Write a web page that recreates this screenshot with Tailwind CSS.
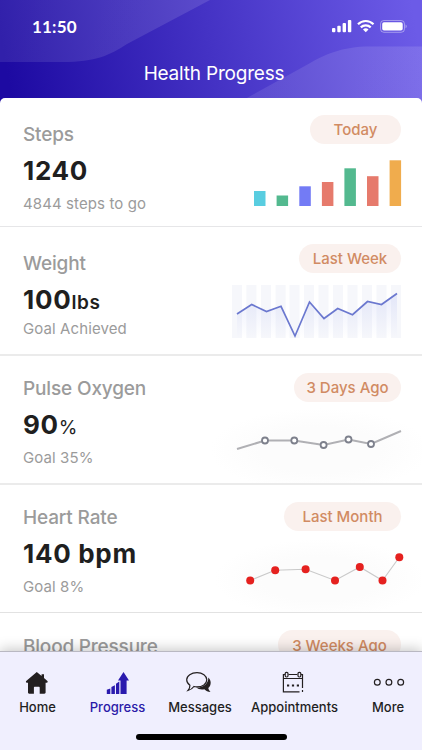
<!DOCTYPE html>
<html lang="en">
<head>
  <meta charset="UTF-8" />
  <meta name="viewport" content="width=device-width, initial-scale=1.0" />
  <title>Health Progress</title>
  <script src="https://cdn.jsdelivr.net/npm/@tailwindcss/browser@4"></script>
</head>
<body class="bg-white font-['Inter',sans-serif]">
  <div class="relative w-[422px] h-[750px] overflow-hidden flex flex-col">

    <!-- Header background -->
    <svg class="absolute top-0 left-0 -z-10" width="422" height="106" viewBox="0 0 422 106">
      <defs>
        <linearGradient id="head" gradientUnits="userSpaceOnUse" x1="10" y1="90" x2="415" y2="20">
          <stop offset="0" stop-color="#1d0aa2" />
          <stop offset="1" stop-color="#6c5be7" />
        </linearGradient>
        <linearGradient id="wave" x1="0" y1="0" x2="1" y2="0">
          <stop offset="0" stop-color="#fff" stop-opacity=".09" />
          <stop offset="1" stop-color="#fff" stop-opacity=".12" />
        </linearGradient>
      </defs>
      <rect width="422" height="106" fill="url(#head)" />
      <path d="M0 0H210L127 44C110 55 96 62 62 62H0Z" fill="url(#wave)" />
      <path d="M245 99L303 67C325 54 342 46.500 370 46.500H422V106H232Z" fill="url(#wave)" />
    </svg>

    <!-- Header -->
    <header class="h-[98px] shrink-0 text-white">
      <div class="h-[52px] flex justify-between items-center pl-[32px] pr-[15px]">
        <span class="font-['Lato',sans-serif] font-bold text-[17px] leading-5 tracking-[0.2px] mt-[1px]">11:50</span>
        <svg width="76" height="14" viewBox="331 19 76 14" fill="#fff">
          <rect x="332" y="28" width="3.400" height="4.200" rx="1" />
          <rect x="337.300" y="25.700" width="3.400" height="6.500" rx="1" />
          <rect x="342.600" y="23" width="3.400" height="9.200" rx="1" />
          <rect x="347.900" y="20" width="3.400" height="12.200" rx="1" />
          <g fill="none" stroke="#fff" stroke-width="2.200">
            <path d="M358 24.200C362.300 19.900 369.200 19.900 373.500 24.200" />
            <path d="M360.800 27.400C363.600 24.600 367.900 24.600 370.700 27.400" />
          </g>
          <path d="M363 29.400C364.600 27.900 366.900 27.900 368.500 29.400L365.750 32.200Z" />
          <rect x="380.500" y="20.500" width="24" height="11.800" rx="3.400" fill="none" stroke="#fff" stroke-opacity=".4" />
          <rect x="382.200" y="22.200" width="20.500" height="8.400" rx="1.800" />
          <path d="M405.600 24.500C407 25 407 27.800 405.600 28.300Z" opacity=".5" />
        </svg>
      </div>
      <h1 class="text-center text-[19px] leading-6 pt-[10px] pl-[6px] tracking-[-0.2px]">Health Progress</h1>
    </header>

    <main class="flex-1 min-h-0 overflow-hidden text-[#1f1f1f]">
      <!-- Steps -->
      <section class="h-[129px] flex justify-between bg-white rounded-t-[5px] border-b border-[#e6e6e8]">
        <div class="pl-[23px] pt-[25px]">
          <h2 class="text-[19px] leading-6 font-medium tracking-[-0.15px] text-[#9b9b9b]">Steps</h2>
          <p class="mt-[8px] text-[26px] leading-8 font-bold tracking-[0.7px]">1240</p>
          <p class="mt-[7px] text-[15px] leading-5 tracking-[0.1px] text-[#9b9b9b]">4844 steps to go</p>
        </div>
        <div class="w-[211px] pt-[17px] flex flex-col items-end">
          <span class="mr-[21px] w-[91px] h-[29px] rounded-full bg-[#faf1ee] text-[#d18b63] text-[15px] leading-[29px] font-medium text-center">Today</span>
          <svg width="211" height="81" viewBox="211 144 211 81">
            <rect x="254" y="191" width="11.500" height="15" fill="#59cde0" />
            <rect x="276.600" y="195.500" width="11.500" height="10.500" fill="#53b98f" />
            <rect x="299.300" y="186.300" width="11.500" height="19.700" fill="#737bf5" />
            <rect x="321.900" y="182" width="11.500" height="24" fill="#e67a6c" />
            <rect x="344.400" y="168.300" width="11.500" height="37.700" fill="#53b98f" />
            <rect x="367" y="176.200" width="11.500" height="29.800" fill="#e67a6c" />
            <rect x="389.600" y="160.300" width="11.500" height="45.700" fill="#f0ac4d" />
          </svg>
        </div>
      </section>

      <!-- Weight -->
      <section class="h-[129px] flex justify-between bg-white border-b-2 border-[#ebebeb]">
        <div class="pl-[23px] pt-[25px]">
          <h2 class="text-[19px] leading-6 font-medium tracking-[-0.15px] text-[#9b9b9b]">Weight</h2>
          <p class="mt-[8px] text-[26px] leading-8 font-bold tracking-[0.7px]">100<span class="text-[19px] leading-none font-semibold">lbs</span></p>
          <p class="mt-[3px] text-[15px] leading-5 tracking-[0.1px] text-[#9b9b9b]">Goal Achieved</p>
        </div>
        <div class="w-[211px] pt-[17px] flex flex-col items-end">
          <span class="mr-[21px] w-[102px] h-[29px] rounded-full bg-[#faf1ee] text-[#d18b63] text-[15px] leading-[30px] font-medium text-center">Last Week</span>
          <svg width="211" height="81" viewBox="211 273 211 81">
            <defs>
              <linearGradient id="area" x1="0" y1="0" x2="0" y2="1">
                <stop offset="0" stop-color="#7f8fe8" stop-opacity=".16" />
                <stop offset="1" stop-color="#7f8fe8" stop-opacity="0" />
              </linearGradient>
            </defs>
            <g fill="#f6f7fb">
              <rect x="232" y="285" width="10" height="53" />
              <rect x="246.400" y="285" width="10" height="53" />
              <rect x="261" y="285" width="10" height="53" />
              <rect x="275.600" y="285" width="10" height="53" />
              <rect x="289.500" y="285" width="10" height="53" />
              <rect x="304" y="285" width="10" height="53" />
              <rect x="318.500" y="285" width="10" height="53" />
              <rect x="333" y="285" width="10" height="53" />
              <rect x="347.500" y="285" width="10" height="53" />
              <rect x="362" y="285" width="10" height="53" />
              <rect x="376.500" y="285" width="10" height="53" />
              <rect x="391" y="285" width="10" height="53" />
            </g>
            <path d="M237 314L251.700 304.500L266.500 311.500L281 306L295 336L309.500 302L324 318.500L337.700 308.500L352.500 314.700L367.500 301.500L381.500 304.500L397 293.500V338H237Z" fill="url(#area)" />
            <path d="M237 314L251.700 304.500L266.500 311.500L281 306.300L295 336L309.500 302L324 318.500L337.700 308.500L352.500 314.700L367.500 301.500L381.500 304.500L397 293.500" fill="none" stroke="#6b78cf" stroke-width="1.700" />
          </svg>
        </div>
      </section>

      <!-- Pulse Oxygen -->
      <section class="h-[129px] flex justify-between bg-white border-b-2 border-[#ebebeb]">
        <div class="pl-[23px] pt-[21px]">
          <h2 class="text-[19px] leading-6 font-medium tracking-[-0.15px] text-[#9b9b9b]">Pulse Oxygen</h2>
          <p class="mt-[8px] text-[26px] leading-8 font-bold tracking-[0.7px]">90<span class="text-[19px] leading-none font-normal">%</span></p>
          <p class="mt-[7px] text-[15px] leading-5 tracking-[0.1px] text-[#9b9b9b]">Goal 35%</p>
        </div>
        <div class="w-[211px] pt-[17px] flex flex-col items-end">
          <span class="mr-[21px] w-[107px] h-[29px] rounded-full bg-[#faf1ee] text-[#d18b63] text-[15px] leading-[29px] font-medium text-center">3 Days Ago</span>
          <svg width="211" height="81" viewBox="211 402 211 81">
            <defs>
              <radialGradient id="haze">
                <stop offset=".55" stop-color="#fcfcfc" />
                <stop offset="1" stop-color="#fff" />
              </radialGradient>
            </defs>
            <ellipse cx="320" cy="450" rx="110" ry="42" fill="url(#haze)" />
            <path d="M237 449L265 440.500H294L323.500 445L348.500 439.500L371 444L401 431" fill="none" stroke="#b0b0b4" stroke-width="2" />
            <g fill="#fff" stroke="#7d808c" stroke-width="1.800">
              <circle cx="265" cy="440.500" r="3" />
              <circle cx="294.300" cy="440.500" r="3" />
              <circle cx="323.600" cy="445" r="3" />
              <circle cx="348.500" cy="439.500" r="3" />
              <circle cx="371" cy="444" r="3" />
            </g>
          </svg>
        </div>
      </section>

      <!-- Heart Rate -->
      <section class="h-[128px] flex justify-between bg-white border-b border-[#e2e2e2]">
        <div class="pl-[23px] pt-[21px]">
          <h2 class="text-[19px] leading-6 font-medium tracking-[-0.15px] text-[#9b9b9b]">Heart Rate</h2>
          <p class="mt-[8px] text-[26px] leading-8 font-bold tracking-[0.7px]">140 bpm</p>
          <p class="mt-[7px] text-[15px] leading-5 tracking-[0.1px] text-[#9b9b9b]">Goal 8%</p>
        </div>
        <div class="w-[211px] pt-[17px] flex flex-col items-end">
          <span class="mr-[21px] w-[117px] h-[29px] rounded-full bg-[#faf1ee] text-[#d18b63] text-[15px] leading-[29px] font-medium text-center">Last Month</span>
          <svg width="211" height="81" viewBox="211 531 211 81">
            <ellipse cx="320" cy="579" rx="106" ry="40" fill="url(#haze)" />
            <path d="M250 580.500L275 570.300L305.500 569.200L335 580.500L359.800 567L382.500 580.500L399.300 557.300" fill="none" stroke="#c9c9c9" stroke-width="1.100" />
            <g fill="#e5211f">
              <circle cx="250.200" cy="580.500" r="4" />
              <circle cx="275.200" cy="570.300" r="4" />
              <circle cx="305.600" cy="569.200" r="4" />
              <circle cx="335" cy="580.500" r="4" />
              <circle cx="359.800" cy="567" r="4" />
              <circle cx="382.500" cy="580.500" r="4" />
              <circle cx="399.300" cy="557.300" r="4" />
            </g>
          </svg>
        </div>
      </section>

      <!-- Blood Pressure -->
      <section class="h-[129px] flex justify-between bg-white">
        <h2 class="pl-[23px] pt-[22px] text-[19px] leading-6 font-medium tracking-[-0.2px] text-[#9b9b9b]">Blood Pressure</h2>
        <div class="pt-[17px]">
          <span class="block mr-[21px] w-[123px] h-[29px] rounded-full bg-[#faf1ee] text-[#d18b63] text-[15px] leading-[31px] font-medium text-center">3 Weeks Ago</span>
        </div>
      </section>
    </main>

    <!-- Tab bar -->
    <nav class="relative h-[99px] shrink-0 bg-[#f0effe] border-t border-[#b9b8c2] shadow-[0_-2px_12px_rgba(0,0,0,0.22)] flex flex-col items-center text-[#1f1f1f]">
      <div class="w-full grid grid-cols-[75px_85px_80px_109px_73px] pt-[19px] text-[13px] leading-4 font-medium">
        <a class="flex flex-col items-center gap-[4px]">
          <svg width="25" height="24" viewBox="25 671 25 24" fill="#231f20">
            <path d="M36.800 672L41.600 676V674.200H44V678.100L47.400 681C48 681.700 47.600 682.800 46.700 682.800H45.600V692.600C45.600 693.300 45.100 693.800 44.400 693.800H39.700V687.800C39.700 687.200 39.300 686.800 38.700 686.800H34.900C34.300 686.800 33.900 687.200 33.900 687.800V693.800H29.200C28.500 693.800 28 693.300 28 692.600V682.800H26.900C26 682.800 25.600 681.700 26.200 681Z" />
          </svg>
          Home
        </a>
        <a class="flex flex-col items-center gap-[4px] text-[#2a1aa8]">
          <svg width="23" height="24" viewBox="107 671 23 24" fill="#2a1aae">
            <path d="M107.800 689.800L111.300 688.600V694H107.800Z" />
            <path d="M112.400 687L115.900 685.300V694H112.400Z" />
            <path d="M117 683.800L120.300 681.500V694H117Z" />
            <path d="M121.500 680.500H119L124.500 672L130 680.500H127.600V694H121.500Z" />
          </svg>
          Progress
        </a>
        <a class="flex flex-col items-center gap-[4px]">
          <svg width="30" height="24" viewBox="185 671 30 24">
            <path d="M208.300 677.500C211.500 680.300 211.500 685.500 208.300 687.900C208.500 689.300 209.300 690.700 210.500 692C208 692 205.800 690.800 204.300 689.300C201 689.800 198.300 689.300 196.200 687.600C203.500 687.900 208.500 683.600 208.300 677.500Z" fill="#231f20" />
            <path d="M197 672.600C202.500 672.600 206.800 675.700 206.800 679.800C206.800 683.900 202.500 686.900 197 686.900C195.800 686.900 194.900 686.800 193.900 686.500C192.400 688.600 190.600 689.900 188 690.500C189.500 688.800 190 687.300 189.900 685.200C187.900 683.800 186.700 681.900 186.700 679.700C186.700 675.700 191.300 672.600 197 672.600Z" fill="#f0effe" stroke="#231f20" stroke-width="1.200" />
          </svg>
          Messages
        </a>
        <a class="flex flex-col items-center gap-[4px]">
          <svg width="25" height="24" viewBox="282 671 25 24" fill="none" stroke="#231f20" stroke-width="1.200">
            <path d="M285 674.500H283.400V691.900H299.500M302.500 691.900V690M302.500 688V674.500H301" />
            <path d="M288.500 674.500H297.300M283.400 678.500H302.500" />
            <rect x="285.200" y="672.400" width="2.800" height="4.600" rx="1.200" />
            <rect x="298" y="672.400" width="2.800" height="4.600" rx="1.200" />
            <path d="M287 685.500H289.200M291.900 685.500H294.100M296.800 685.500H299" stroke-width="2" />
          </svg>
          Appointments
        </a>
        <a class="flex flex-col items-center gap-[4px] pl-[5px]">
          <svg width="34" height="24" viewBox="371 671 34 24" fill="none" stroke="#231f20" stroke-width="1.200">
            <circle cx="377.300" cy="682.300" r="2.900" />
            <circle cx="388.900" cy="682.300" r="2.900" />
            <circle cx="400.700" cy="682.300" r="2.900" />
          </svg>
          More
        </a>
      </div>
      <div class="mt-[19px] w-[151px] h-[6px] rounded-full bg-black"></div>
    </nav>
  </div>
</body>
</html>
